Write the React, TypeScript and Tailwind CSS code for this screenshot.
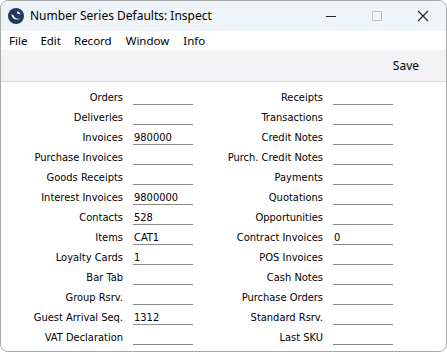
import React from "react";

const left: [string, string][] = [
  ["Orders", ""],
  ["Deliveries", ""],
  ["Invoices", "980000"],
  ["Purchase Invoices", ""],
  ["Goods Receipts", ""],
  ["Interest Invoices", "9800000"],
  ["Contacts", "528"],
  ["Items", "CAT1"],
  ["Loyalty Cards", "1"],
  ["Bar Tab", ""],
  ["Group Rsrv.", ""],
  ["Guest Arrival Seq.", "1312"],
  ["VAT Declaration", ""],
];
const right: [string, string][] = [
  ["Receipts", ""],
  ["Transactions", ""],
  ["Credit Notes", ""],
  ["Purch. Credit Notes", ""],
  ["Payments", ""],
  ["Quotations", ""],
  ["Opportunities", ""],
  ["Contract Invoices", "0"],
  ["POS Invoices", ""],
  ["Cash Notes", ""],
  ["Purchase Orders", ""],
  ["Standard Rsrv.", ""],
  ["Last SKU", ""],
];

function Column({ rows }: { rows: [string, string][] }) {
  return (
    <div className="flex w-[200px] flex-col">
      {rows.map(([l, v]) => (
        <div key={l} className="flex h-[20px] items-stretch">
          <div className="flex w-[122px] items-end justify-end whitespace-nowrap pb-[1px] leading-[13px]">{l}</div>
          <div className="ml-[10px] flex w-[60px] items-end border-b border-[#8a8a8a] pl-[1px] leading-[13px]">{v}</div>
        </div>
      ))}
    </div>
  );
}

export default function App() {
  return (
    <div className="h-[352px] w-[447px] overflow-hidden rounded-[8px] border border-[#a8a8a8] bg-white" style={{ fontFamily: '"Noto Sans", sans-serif' }}>
      <div className="flex h-[30px] items-center bg-[#eff4f9] text-[12px] text-black">
        <svg width="16" height="16" viewBox="0 0 16 16" className="ml-[7px] mr-[6px]">
          <circle cx="8" cy="8" r="8" fill="#1f3a5f" />
          <path d="M3.2 6.5 C4 11 9 13.2 12.8 10 C10 11.5 6 10.5 5.4 7 Z" fill="#ffffff" />
          <path d="M9 3.5 C11 3.5 12.5 5 12.5 7 C11.5 6 10.5 5.5 9 5.5 Z" fill="#ffffff" />
        </svg>
        <span>Number Series Defaults: Inspect</span>
        <div className="ml-auto flex items-center">
          <div className="flex w-[46px] justify-center">
            <div className="h-[1px] w-[10px] bg-[#222]" />
          </div>
          <div className="flex w-[46px] justify-center">
            <div className="h-[10px] w-[10px] border border-[#c4c4c4]" />
          </div>
          <div className="flex w-[46px] justify-center">
            <svg width="12" height="12" viewBox="0 0 12 12">
              <path d="M1 1 L11 11 M11 1 L1 11" stroke="#222" strokeWidth="1.1" />
            </svg>
          </div>
        </div>
      </div>
      <div className="flex h-[19px] items-center bg-white text-[11.5px] text-black">
        <span className="ml-[8px]">File</span>
        <span className="ml-[13px]">Edit</span>
        <span className="ml-[13px]">Record</span>
        <span className="ml-[14px]">Window</span>
        <span className="ml-[14px]">Info</span>
      </div>
      <div className="flex h-[32px] items-center justify-end border-b border-[#d6d6d6] bg-[#f3f3f5] pr-[27px] text-[12px] text-black">
        Save
      </div>
      <div className="flex pt-[3px] text-[11px] text-black" style={{ fontFamily: '"DejaVu Sans Condensed", "DejaVu Sans", sans-serif' }}>
        <Column rows={left} />
        <Column rows={right} />
      </div>
    </div>
  );
}
